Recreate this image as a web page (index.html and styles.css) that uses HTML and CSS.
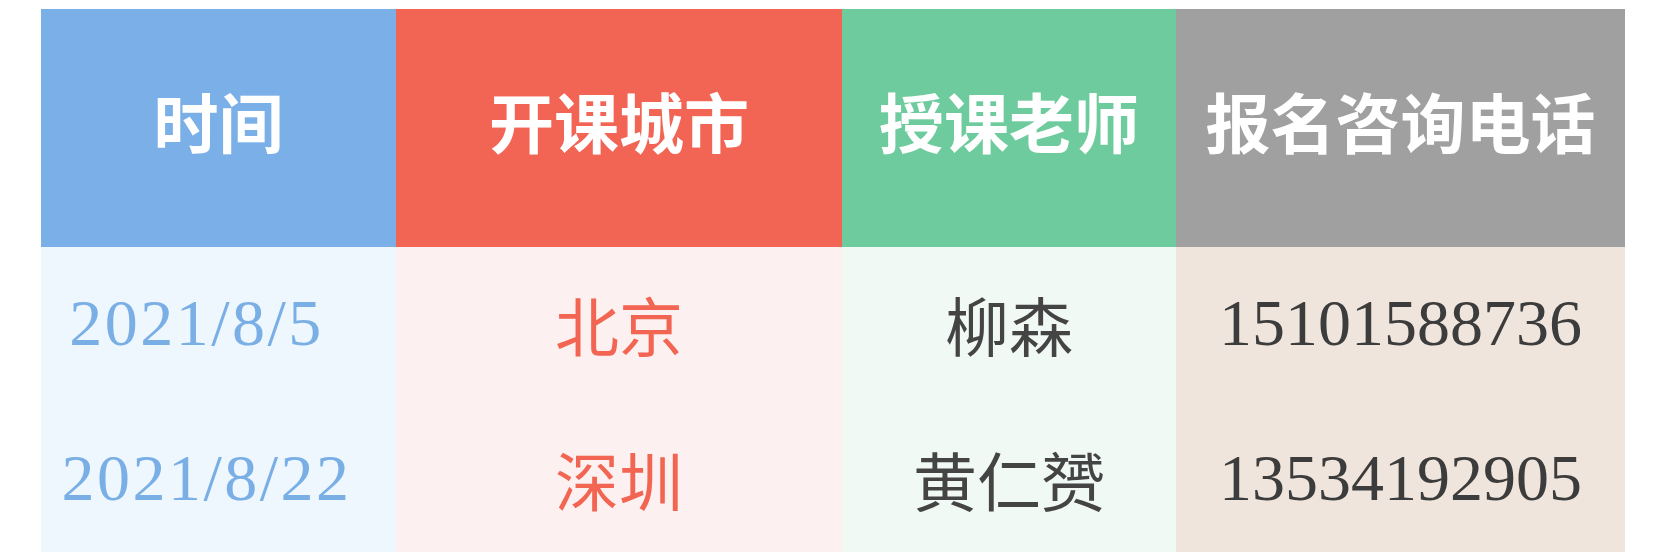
FILE: index.html
```html
<!DOCTYPE html>
<html lang="zh-CN">
<head>
<meta charset="utf-8">
<title>课程安排</title>
<link rel="stylesheet" href="styles.css">
</head>
<body>
<div class="page">
  <div class="schedule">
    <div class="cell head head-time">时间</div>
    <div class="cell head head-city">开课城市</div>
    <div class="cell head head-teacher">授课老师</div>
    <div class="cell head head-phone">报名咨询电话</div>

    <div class="cell body time"><span class="date d1">2021/8/5</span></div>
    <div class="cell body city"><span class="cjk">北京</span></div>
    <div class="cell body teacher"><span class="cjk">柳森</span></div>
    <div class="cell body phone"><span class="num">15101588736</span></div>

    <div class="cell body time"><span class="date d2">2021/8/22</span></div>
    <div class="cell body city"><span class="cjk">深圳</span></div>
    <div class="cell body teacher"><span class="cjk">黄仁赟</span></div>
    <div class="cell body phone"><span class="num">13534192905</span></div>
  </div>
</div>
</body>
</html>
```

FILE: styles.css
```css
html, body {
  margin: 0;
  padding: 0;
  background: #ffffff;
  overflow: hidden;
}

.page {
  padding: 9px 0 0 41px;
}

.schedule {
  display: grid;
  grid-template-columns: 355px 446px 334px 449px;
  grid-template-rows: 238px 155px 155px;
}

.cell {
  display: flex;
  align-items: center;
  justify-content: center;
}

.head {
  color: #ffffff;
  font-family: "Noto Sans CJK SC", "Noto Sans", sans-serif;
  font-weight: 700;
  font-size: 65px;
  padding-bottom: 16px;
  box-sizing: border-box;
}

.head-time { background: #7aafe8; }
.head-city { background: #f26555; }
.head-teacher { background: #6ecb9e; }
.head-phone { background: #a0a0a0; }

.body {
  padding-bottom: 3px;
  box-sizing: border-box;
}

.time { background: #eef6fe; }
.city { background: #fdf0f0; }
.teacher { background: #f1f9f5; }
.phone { background: #efe5dc; }

.cjk {
  font-family: "Noto Sans CJK SC", "Noto Sans", sans-serif;
  font-size: 64px;
  font-weight: 400;
}

.city .cjk { color: #f26552; }
.teacher .cjk { color: #444444; }

.date, .num {
  font-family: "Liberation Serif", "Times New Roman", serif;
  font-size: 66px;
}

.date {
  color: #7aafe6;
  letter-spacing: 2.5px;
}

.d1 { margin-right: 44px; }
.d2 { margin-right: 24px; }

.num {
  color: #3c3c3c;
}
```
